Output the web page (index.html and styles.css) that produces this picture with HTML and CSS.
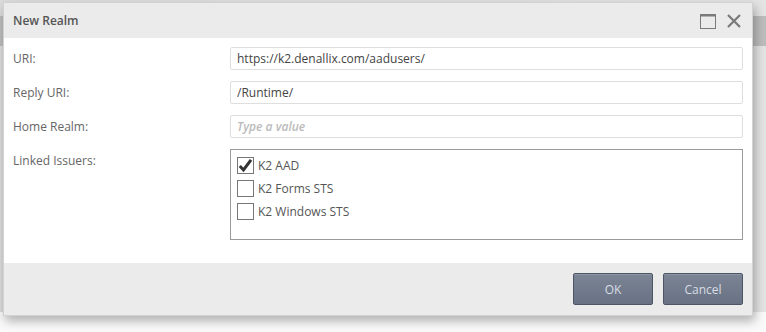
FILE: index.html
```html
<!DOCTYPE html>
<html lang="en">
<head>
    <meta charset="UTF-8">
    <title>New Realm</title>
    <link rel="stylesheet" href="styles.css">
</head>
<body>
    <!-- 배경 페이지 -->
    <div class="backdrop">
        <div class="backdrop-bar"></div>
    </div>

    <!-- 대화상자 -->
    <div class="dialog">
        <div class="dialog-header">
            <div class="dialog-title">New Realm</div>
            <div class="dialog-tools">
                <svg class="tool-icon" width="16" height="16" viewBox="0 0 16 16">
                    <rect x="0.5" y="1.5" width="15" height="14" fill="none" stroke="#7a7a7a" stroke-width="1"/>
                    <rect x="0.5" y="1" width="15" height="2.5" fill="#7a7a7a"/>
                </svg>
                <svg class="tool-icon" width="16" height="16" viewBox="0 0 16 16">
                    <path d="M2 2 L14 14 M14 2 L2 14" stroke="#7a7a7a" stroke-width="2.2" fill="none"/>
                </svg>
            </div>
        </div>

        <div class="dialog-body">
            <div class="form-row">
                <label class="form-label">URI:</label>
                <input class="form-input" type="text" value="https://k2.denallix.com/aadusers/">
            </div>
            <div class="form-row">
                <label class="form-label">Reply URI:</label>
                <input class="form-input" type="text" value="/Runtime/">
            </div>
            <div class="form-row">
                <label class="form-label">Home Realm:</label>
                <input class="form-input" type="text" placeholder="Type a value">
            </div>
            <div class="form-row">
                <label class="form-label">Linked Issuers:</label>
                <div class="check-list">
                    <div class="check-item">
                        <span class="check-box checked">
                            <svg width="15" height="15" viewBox="0 0 15 15">
                                <path d="M1.8 8 L5.5 12 L13 1.8" stroke="#333" stroke-width="3" fill="none"/>
                            </svg>
                        </span>
                        <span class="check-text">K2 AAD</span>
                    </div>
                    <div class="check-item">
                        <span class="check-box"></span>
                        <span class="check-text">K2 Forms STS</span>
                    </div>
                    <div class="check-item">
                        <span class="check-box"></span>
                        <span class="check-text">K2 Windows STS</span>
                    </div>
                </div>
            </div>
        </div>

        <div class="dialog-footer">
            <button class="btn">OK</button>
            <button class="btn">Cancel</button>
        </div>
    </div>
</body>
</html>
```

FILE: styles.css
```css
* {
    margin: 0;
    padding: 0;
    box-sizing: border-box;
    font-family: 'Open Sans', 'Noto Sans', sans-serif;
}

body {
    width: 766px;
    height: 332px;
    overflow: hidden;
    background: #fafafa;
    position: relative;
}

/* 뒤쪽 페이지 */
.backdrop {
    position: absolute;
    inset: 0 0 20px 0;
    background: linear-gradient(90deg, #dcdcdc 0, #e4e4e4 100%);
}

.backdrop-bar {
    margin-top: 16px;
    height: 30px;
    background: #bdbdbd;
}

/* 대화상자 */
.dialog {
    position: absolute;
    left: 3px;
    top: 2px;
    width: 750px;
    border: 1px solid #d2d2d2;
    background: #ffffff;
    box-shadow: 2px 5px 10px rgba(0, 0, 0, 0.3);
}

.dialog-header {
    height: 35px;
    background: #ebebeb;
    display: flex;
    align-items: center;
    justify-content: space-between;
    padding: 0 10px 0 9px;
}

.dialog-title {
    font-size: 12px;
    font-weight: 600;
    color: #555;
}

.dialog-tools {
    display: flex;
    gap: 10px;
    align-items: center;
}

.tool-icon {
    display: block;
}

.dialog-body {
    padding: 9px 9px 23px 9px;
    display: flex;
    flex-direction: column;
    gap: 11px;
}

.form-row {
    display: flex;
    align-items: flex-start;
}

.form-label {
    width: 217px;
    flex-shrink: 0;
    font-size: 12px;
    color: #666;
    line-height: 23px;
}

.form-input {
    flex: 1;
    height: 23px;
    border: 1px solid #dedede;
    border-radius: 2px;
    padding: 0 6px;
    font-size: 12px;
    color: #444;
    outline: none;
}

.form-input::placeholder {
    color: #bbb;
    font-style: italic;
    font-weight: 600;
}

/* 체크 리스트 */
.check-list {
    flex: 1;
    height: 91px;
    border: 1px solid #9a9a9a;
    padding: 7px 6px;
    display: flex;
    flex-direction: column;
}

.check-item {
    height: 23px;
    display: flex;
    align-items: flex-start;
    gap: 4px;
}

.check-box {
    width: 17px;
    height: 17px;
    border: 1px solid #777;
    background: #fff;
    display: flex;
    align-items: center;
    justify-content: center;
}

.check-text {
    font-size: 12px;
    color: #555;
    line-height: 18px;
}

/* 하단 버튼 */
.dialog-footer {
    height: 52px;
    background: #ebebeb;
    display: flex;
    justify-content: flex-end;
    align-items: center;
    gap: 10px;
    padding: 0 9px;
}

.btn {
    width: 80px;
    height: 32px;
    border: 1px solid #4b5566;
    border-radius: 2px;
    background: linear-gradient(#7a8494, #687284);
    color: #d9dde4;
    font-size: 12px;
    box-shadow: inset 0 1px 0 rgba(255, 255, 255, 0.15);
}
```
